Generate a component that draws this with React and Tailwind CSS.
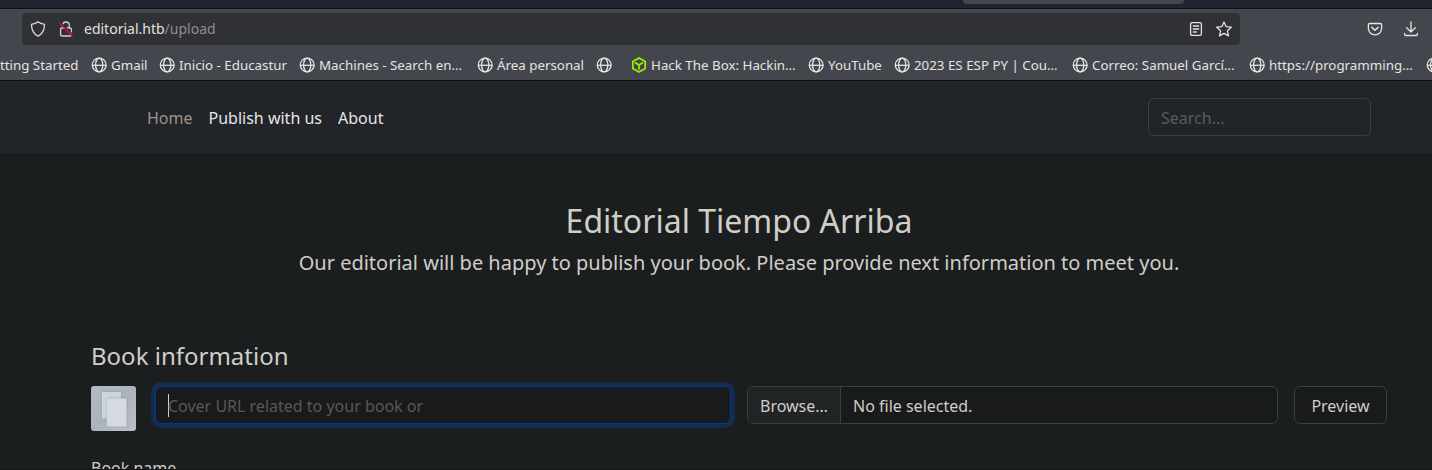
const bookmarks = [
  { label: "Gmail", width: "w-[68px]" },
  { label: "Inicio - Educastur", width: "w-[140px]" },
  { label: "Machines - Search en…", width: "w-[178px]" },
  { label: "Área personal", width: "w-[119px]" },
  { label: "", width: "w-[34px]" },
  { label: "Hack The Box: Hackin…", width: "w-[178px]", cube: true },
  { label: "YouTube", width: "w-[86px]" },
  { label: "2023 ES ESP PY | Cou…", width: "w-[178px]" },
  { label: "Correo: Samuel Garcí…", width: "w-[177px]" },
  { label: "https://programming…", width: "w-[177px]" },
  { label: "", width: "w-[34px]" },
];

function Globe() {
  return (
    <svg className="size-4 shrink-0" viewBox="0 0 16 16" fill="none" stroke="#e6e5e3" strokeWidth="1.3">
      <circle cx="8.200" cy="8" r="6.900" />
      <ellipse cx="8.200" cy="8" rx="3.600" ry="6.900" />
      <path d="M1.200 8.300h14" strokeWidth="1.300" />
    </svg>
  );
}

function Cube() {
  return (
    <svg className="ml-px size-4 shrink-0" viewBox="0 0 16 16" fill="none" stroke="#9fef00" strokeWidth="1.7" strokeLinejoin="round" strokeLinecap="round">
      <path d="M8 .9 14.2 4.4v7.2L8 15.1 1.8 11.6V4.4z" />
      <path d="M4.4 5.8 8 7.9l3.6-2.1M8 7.9v4" />
    </svg>
  );
}

function Shield() {
  return (
    <svg className="size-4 shrink-0" viewBox="0 0 16 16" fill="none" stroke="#d8d7d5" strokeWidth="1.35" strokeLinejoin="round">
      <path d="M8 .9c1.7 1.2 3.8 2 6.5 2.4.1 5.4-1.5 9.3-6.5 11.8C3 12.600 1.400 8.700 1.500 3.300 4.200 2.900 6.300 2.100 8 .9z" />
    </svg>
  );
}

function InsecureLock() {
  return (
    <svg className="size-4 shrink-0" viewBox="0 0 16 16" fill="none">
      <path d="M4.700 7V4.300a3.300 3.300 0 0 1 6.600 0V7" stroke="#d2d2d1" strokeWidth="1.300" />
      <rect x="2.600" y="7" width="10.800" height="8" rx="1.200" stroke="#d2d2d1" strokeWidth="1.300" />
      <path d="M2.300 2.100 15 14.700" stroke="#303134" strokeWidth="2.400" />
      <path d="M1.200 1.900 14.700 15.300" stroke="#e20b43" strokeWidth="1.400" />
    </svg>
  );
}

function Reader() {
  return (
    <svg className="size-4 shrink-0" viewBox="0 0 16 16" fill="none" stroke="#e2e1df" strokeWidth="1.300" strokeLinecap="round">
      <rect x="2.600" y="1.600" width="10.800" height="12.800" rx="1.300" />
      <path d="M5.300 5h5.400M5.300 8h5.400M5.300 11h3" />
    </svg>
  );
}

function Star() {
  return (
    <svg className="size-4 shrink-0" viewBox="0 0 16 16" fill="none" stroke="#e2e1df" strokeWidth="1.300" strokeLinejoin="round">
      <path d="m8 1 2.100 4.600 5.200.6-3.900 3.500 1.100 5.200L8 12.400l-4.500 2.500 1.100-5.200L.7 6.200l5.200-.6z" />
    </svg>
  );
}

function Pocket() {
  return (
    <svg className="size-4 shrink-0" viewBox="0 0 16 16" fill="none" stroke="#e6e5e3" strokeWidth="1.300" strokeLinecap="round" strokeLinejoin="round">
      <path d="M2.600 2.500h10.800a1.200 1.200 0 0 1 1.200 1.200v3.900a6.600 6.200 0 0 1-13.200 0V3.700a1.200 1.200 0 0 1 1.200-1.200z" />
      <path d="M4.900 6.400 8 9.300l3.100-2.900" strokeWidth="1.500" />
    </svg>
  );
}

function Download() {
  return (
    <svg className="size-4 shrink-0" viewBox="0 0 16 16" fill="none" stroke="#e6e5e3" strokeWidth="1.300" strokeLinecap="round" strokeLinejoin="round">
      <path d="M8 1v9.500M3.700 6.700 8 11l4.300-4.300M1.600 12.300v1a1.200 1.200 0 0 0 1.200 1.200h10.400a1.200 1.200 0 0 0 1.200-1.200v-1" />
    </svg>
  );
}

function BookCover() {
  return (
    <svg className="size-[45px] shrink-0 rounded-[3px]" viewBox="0 0 45 45">
      <defs>
        <linearGradient id="backdrop" x1="0" y1="0" x2="1" y2="1">
          <stop offset="0" stopColor="#b3bac3" />
          <stop offset=".5" stopColor="#acb3bc" />
          <stop offset="1" stopColor="#bcc1c8" />
        </linearGradient>
        <filter id="shade" x="-30%" y="-30%" width="160%" height="160%" colorInterpolationFilters="sRGB">
          <feDropShadow dx=".3" dy="-.3" stdDeviation="1.200" floodColor="#7c899b" floodOpacity=".6" />
        </filter>
      </defs>
      <rect width="45" height="45" fill="url(#backdrop)" />
      <path d="M11 6h19v26.500H11z" fill="#ced5dc" filter="url(#shade)" />
      <path d="M15.800 12.500h19.700v28H15.800z" fill="#d4dae0" filter="url(#shade)" />
    </svg>
  );
}

function BrowserChrome() {
  return (
    <header className="h-[81px] shrink-0 border-b border-[#0d0f12] bg-[#44464e]">
      <div className="flex h-[9px] border-b border-[#0d0f12] bg-[#222530] pl-[963px]">
        <div className="h-1 w-[221px] rounded-b bg-[#44464e]" />
      </div>
      <div className="flex h-10 items-center pl-[22px]">
        <div className="flex h-8 w-[1218px] items-center rounded bg-[#303134] pl-2 pr-2">
          <Shield />
          <div className="ml-3 flex">
            <InsecureLock />
          </div>
          <div className="ml-[10px] grow text-[14px] leading-5 text-[#e2e1df]">
            editorial.htb<span className="text-[#8d8e90]">/upload</span>
          </div>
          <div className="flex gap-3">
            <Reader />
            <Star />
          </div>
        </div>
        <div className="ml-[127px] flex gap-5">
          <Pocket />
          <Download />
        </div>
      </div>
      <nav className="flex h-8 items-center overflow-hidden whitespace-nowrap text-[13.33px] leading-5 text-[#e4e3e1]">
        <div className="flex w-[91px] shrink-0 justify-end pr-[12.5px]">Getting Started</div>
        {bookmarks.map((item, i) => (
          <div key={i} className={`flex shrink-0 items-center gap-1 ${item.width}`}>
            {item.cube ? <Cube /> : <Globe />}
            <span>{item.label}</span>
          </div>
        ))}
      </nav>
    </header>
  );
}

export default function App() {
  return (
    <div className="flex h-[470px] w-full flex-col overflow-hidden border-b border-[#151617] bg-[#1b1e1f] font-['Noto_Sans',sans-serif] text-base text-[#d1cdc7]">
      <BrowserChrome />
      <div className="flex h-[72px] shrink-0 items-center justify-between bg-[#212429] pl-[147px] pr-[61px]">
        <nav className="flex gap-4 pt-0.5 text-[#e8e6e3]">
          <a className="text-[#9d9488]">Home</a>
          <a>Publish with us</a>
          <a>About</a>
        </nav>
        <div className="flex h-[38px] w-[223px] items-center rounded-md border border-[#3b3f42] px-3 pt-0.5 text-[#5c5b57]">
          Search...
        </div>
      </div>
      <main className="flex flex-col">
        <div className="mt-[49px] pl-[46px] text-center">
          <h1 className="text-[32px] leading-[38px]">Editorial Tiempo Arriba</h1>
          <p className="mt-2 text-xl leading-[30px]">
            Our editorial will be happy to publish your book. Please provide next information to meet you.
          </p>
        </div>
        <section className="mt-[63px] pl-[91px] pr-[45px]">
          <h2 className="text-2xl leading-[29px]">Book information</h2>
          <div className="mt-4 flex h-[45px] items-start">
            <BookCover />
            <div className="ml-[19px] flex h-[38px] w-[576px] items-center rounded-md border border-[#003b8e] bg-[#191a1b] pl-3 ring-4 ring-[#162c4d]">
              <span className="h-[23px] w-px bg-[#d1cdc7]" />
              <span className="-ml-px pt-0.5 text-[#5c5850]">Cover URL related to your book or</span>
            </div>
            <div className="ml-4 flex h-[38px] w-[531px] items-center overflow-hidden rounded-md border border-[#3b3f42] bg-[#191a1b]">
              <span className="flex h-full w-[93px] items-center border-r border-[#3b3f42] bg-[#212425] pl-3 pt-0.5">Browse…</span>
              <span className="pl-3 pt-0.5">No file selected.</span>
            </div>
            <div className="ml-4 flex h-[38px] w-[93px] items-center justify-center rounded-md border border-[#3b3f42] bg-[#191a1b] pt-0.5">
              Preview
            </div>
          </div>
          <p className="mt-[25px] leading-6">Book name</p>
        </section>
      </main>
    </div>
  );
}
